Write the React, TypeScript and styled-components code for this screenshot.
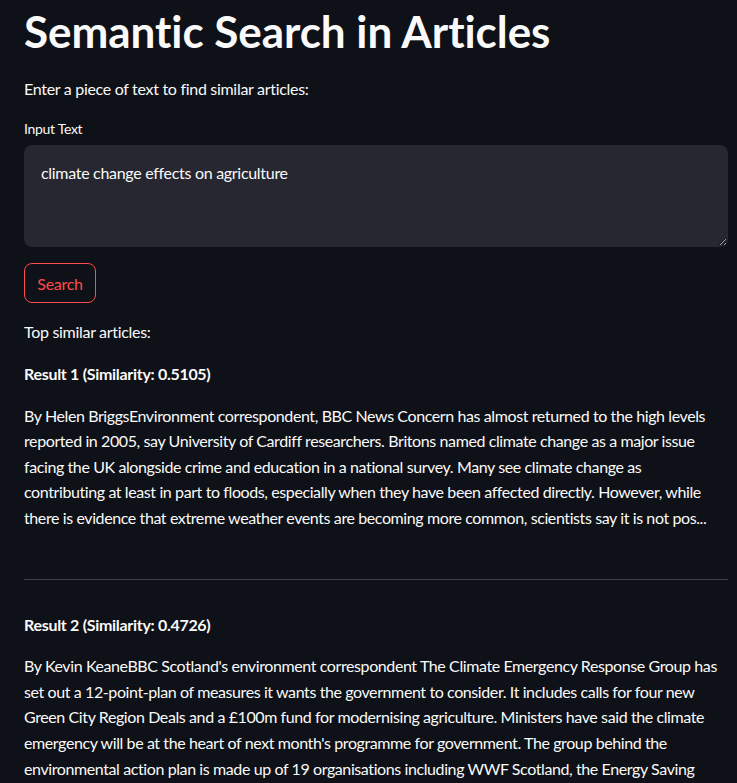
import React from "react";
import styled, { createGlobalStyle } from "styled-components";

const GlobalStyle = createGlobalStyle`
  html, body {
    margin: 0;
    padding: 0;
    background: #0e1117;
    color: #fafafa;
    font-family: "Source Sans Pro", Lato, "Liberation Sans", sans-serif;
    overflow: hidden;
  }
  * { box-sizing: border-box; }
`;

const Main = styled.main`
  display: flex;
  flex-direction: column;
  padding: 5px 9px 0 24px;
  width: 737px;
  letter-spacing: -0.3px;
`;

const Title = styled.h1`
  margin: 0 0 18px;
  font-size: 44px;
  font-weight: 700;
  line-height: 52.8px;
  letter-spacing: -0.05px;
`;

const Text = styled.p<{ $bold?: boolean; $gap?: number }>`
  margin: 0 0 ${(p) => p.$gap ?? 16}px;
  font-size: 16px;
  line-height: 25.6px;
  font-weight: ${(p) => (p.$bold ? 700 : 400)};
`;

const Article = styled.p`
  margin: 0 0 16px;
  padding-right: 5px;
  font-size: 16px;
  line-height: 25.6px;
  letter-spacing: -0.4px;
`;

const Label = styled.label`
  display: block;
  font-size: 14px;
  line-height: 18px;
  margin: 0 0 7px;
`;

const TextArea = styled.textarea`
  display: block;
  width: 100%;
  height: 102px;
  margin: 0 0 16px;
  padding: 16px;
  border: 1px solid transparent;
  border-radius: 8px;
  background: #262730;
  color: #fafafa;
  font-family: inherit;
  font-size: 16px;
  line-height: 22.4px;
  letter-spacing: -0.3px;
  resize: vertical;
  outline: none;
`;

const Button = styled.button`
  align-self: flex-start;
  width: 72px;
  height: 40px;
  padding: 0;
  margin: 0 0 16px;
  border: 1px solid #ff4b4b;
  border-radius: 8px;
  background: transparent;
  color: #ff4b4b;
  font-family: inherit;
  font-size: 16px;
  line-height: 25.6px;
  letter-spacing: -0.3px;
  cursor: pointer;
`;

const Divider = styled.hr`
  width: 100%;
  margin: 32px 0 32px;
  border: none;
  border-top: 1px solid rgba(250, 250, 250, 0.2);
`;

const results = [
  {
    score: "0.5105",
    text:
      "By Helen BriggsEnvironment correspondent, BBC News Concern has almost returned to the high levels reported in 2005, say University of Cardiff researchers. Britons named climate change as a major issue facing the UK alongside crime and education in a national survey. Many see climate change as contributing at least in part to floods, especially when they have been affected directly. However, while there is evidence that extreme weather events are becoming more common, scientists say it is not pos...",
  },
  {
    score: "0.4726",
    text:
      "By Kevin KeaneBBC Scotland's environment correspondent The Climate Emergency Response Group has set out a 12-point-plan of measures it wants the government to consider. It includes calls for four new Green City Region Deals and a £100m fund for modernising agriculture. Ministers have said the climate emergency will be at the heart of next month's programme for government. The group behind the environmental action plan is made up of 19 organisations including WWF Scotland, the Energy Saving Trust and the National Farmers Union Scotland...",
  },
];

export default function App() {
  return (
    <>
      <GlobalStyle />
      <Main>
        <Title>Semantic Search in Articles</Title>
        <Text $gap={19}>Enter a piece of text to find similar articles:</Text>
        <Label htmlFor="q">Input Text</Label>
        <TextArea id="q" defaultValue="climate change effects on agriculture" />
        <Button>Search</Button>
        <Text>Top similar articles:</Text>
        {results.map((r, i) => (
          <React.Fragment key={r.score}>
            {i > 0 && <Divider />}
            <Text $bold>
              Result {i + 1} (Similarity: {r.score})
            </Text>
            <Article>{r.text}</Article>
          </React.Fragment>
        ))}
      </Main>
    </>
  );
}
